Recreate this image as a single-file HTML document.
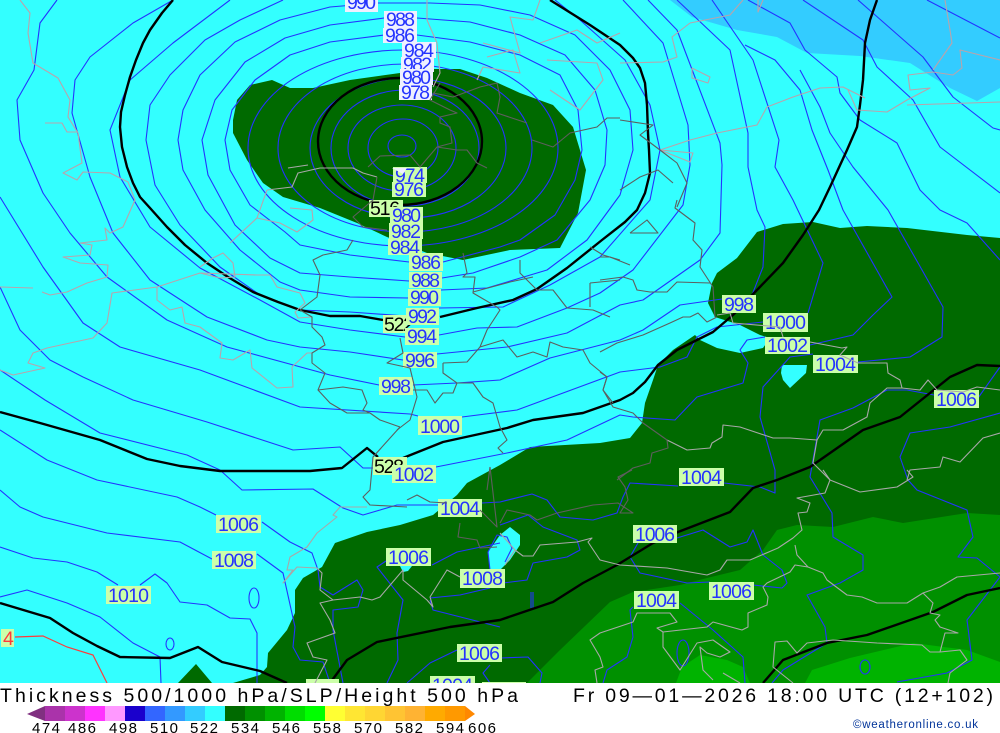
<!DOCTYPE html>
<html><head><meta charset="utf-8"><title>Thickness 500/1000 hPa/SLP/Height 500 hPa</title>
<style>
html,body{margin:0;padding:0;background:#fff;width:1000px;height:733px;overflow:hidden}
svg{display:block}
text{font-family:"Liberation Sans",sans-serif}
.b polyline,.b path,.b ellipse{fill:none;stroke:#2433ff;stroke-width:1.1;stroke-linejoin:round}
.k polyline,.k path,.k ellipse{fill:none;stroke:#000;stroke-width:2.4;stroke-linejoin:round}
.c polyline{fill:none;stroke-width:1.1;stroke-linejoin:round}
.l rect{fill:#ccffaa}
.l rect.w{fill:#eef0ff}
.l text{fill:#2433ff;font-size:19.5px}
.l text.t{fill:#000}
.s text{font-size:15px;fill:#000}
</style></head><body>
<svg width="1000" height="733" viewBox="0 0 1000 733" xmlns="http://www.w3.org/2000/svg">
<rect width="1000" height="683" fill="#33ffff"/>
<!-- light blue NE -->
<polygon fill="#33ccff" points="670,0 692,17 737,30 777,37 807,53 860,56 910,63 950,88 977,101 1000,88 1000,0"/>
<!-- dark green north -->
<polygon fill="#006a00" points="233,120 237,100 250,85 272,80 290,88 313,88 350,80 400,73 433,69 460,69 487,78 520,93 553,105 573,127 586,170 578,213 560,248 510,250 463,260 427,253 387,237 357,223 320,208 283,197 263,183 247,160 233,133"/>
<!-- dark green south-east -->
<polygon fill="#006a00" points="233,683 260,675 267,667 268,653 287,630 295,613 295,590 303,578 322,567 335,543 367,532 400,525 433,515 457,495 467,483 500,465 530,447 600,443 630,438 642,423 645,403 653,380 658,365 673,350 695,335 700,340 717,348 740,353 763,348 770,338 760,335 740,325 715,317 708,303 712,283 717,273 737,258 757,232 783,224 813,222 840,228 867,226 907,228 967,235 1000,238 1000,683"/>
<polygon fill="#006a00" points="178,683 196,664 212,683"/>
<polygon fill="#33ffff" points="782,365 807,365 806,373 790,388 783,380 781,373"/>
<polygon fill="#33ffff" points="488,552 500,535 510,527 520,535 520,545 510,560 500,570 490,570"/>
<polygon fill="#33ffff" points="400,566 412,566 408,571 403,572"/>
<!-- mid green -->
<polygon fill="#009000" points="527,683 560,650 610,602 633,592 680,585 707,578 740,570 763,550 777,530 797,525 833,527 873,517 903,523 967,513 1000,515 1000,683"/>
<!-- bright green -->
<polygon fill="#00b300" points="676,683 682,667 700,655 727,660 743,667 750,683"/>
<polygon fill="#00b300" points="805,683 812,670 850,658 913,643 967,650 1000,662 1000,683"/>

<!-- isobars -->
<g class="b">
<ellipse cx="402" cy="146" rx="14" ry="11"/>
<ellipse cx="403" cy="148" rx="35" ry="29"/>
<ellipse cx="402" cy="148" rx="54" ry="43"/>
<ellipse cx="405" cy="148" rx="74" ry="58"/>
<ellipse cx="408" cy="148" rx="98" ry="70"/>
<ellipse cx="405" cy="148" rx="127" ry="84"/>
<ellipse cx="403" cy="148" rx="155" ry="98"/>
<polyline points="443,262 500,247 520,240 555,215 575,180 582,150 578,110 560,75 520,55 470,42 417,35 384,35 330,42 290,55 255,80 232,110 225,140 230,170 250,205 285,232 300,245 350,255 409,262"/>
<polyline points="442,278 473,273 520,257 557,240 590,200 605,165 607,130 595,90 565,55 520,35 470,22 417,18 384,18 330,25 285,38 245,62 215,100 202,140 208,175 235,225 270,258 300,273 350,277 409,281"/>
<polyline points="441,290 487,288 547,270 587,240 620,195 633,150 630,110 610,70 575,35 530,15 480,5 430,3 378,3 330,7 280,20 235,42 200,75 183,110 178,140 183,170 205,210 240,250 280,282 300,290 350,297 408,298"/>
<polyline points="439,308 503,307 550,285 600,257 650,200 660,150 650,105 625,60 580,20 555,0"/>
<polyline points="283,0 240,20 205,40 170,75 150,105 146,140 155,185 180,225 220,267 260,295 300,310 350,312 406,316"/>
<polyline points="439,335 477,328 517,327 567,308 600,293 633,270 683,205 690,165 688,125 663,43 623,0"/>
<polyline points="230,0 173,43 130,80 110,130 120,177 150,227 200,268 260,300 300,322 350,330 405,337"/>
<polyline points="437,354 507,347 567,333 620,305 643,300 700,260 720,233 722,165 720,143 677,30 648,0"/>
<polyline points="173,0 133,23 90,57 75,80 72,113 90,177 113,233 150,280 207,317 267,340 300,347 350,352 403,360"/>
<polyline points="413,385 457,383 500,380 550,358 620,340 643,330 680,305 722,299"/>
<polyline points="752,295 763,267 765,227 757,210 748,167 748,133 730,50 677,0"/>
<polyline points="57,0 40,23 34,70 17,100 20,140 43,193 70,233 107,277 167,320 227,347 330,375 379,385"/>
<polyline points="0,197 43,267 83,323 120,347 200,370 300,407 410,414 418,416"/>
<polyline points="462,417 517,410 620,372 660,367 687,357 697,337 717,327 763,322"/>
<polyline points="808,313 823,263 793,200 775,167 779,140 753,60 712,0"/>
<polyline points="0,287 20,330 50,360 83,377 133,400 207,422 293,450 340,447 363,468 373,468"/>
<polyline points="436,467 507,453 567,440 620,415 633,417 675,420 697,397 743,383 748,363 740,350 747,340 765,337"/>
<polyline points="810,345 853,335 873,315 892,297 843,210 828,170 812,130 800,90 775,60 745,45"/>
<polyline points="0,370 45,400 100,433 187,455 220,470 242,490 313,489 343,508 363,515 397,505 438,505"/>
<polyline points="482,503 500,502 532,494 547,500 560,517 593,520 617,513 623,497 630,483 678,486"/>
<polyline points="724,483 760,487 775,493 775,470 760,417 763,387 790,357 813,354"/>
<polyline points="858,362 910,357 942,337 943,307 888,210 853,167 830,133 820,107 800,70"/>
<polyline points="748,0 790,23 805,50 837,77 840,93 860,120 897,143 920,190 940,210 967,223 1000,260"/>
<polyline points="803,0 863,40 877,67 913,100 940,147 1000,193"/>
<polyline points="858,0 923,57 953,97 993,128 1000,130"/>
<polyline points="927,0 1000,38"/>
<polyline points="978,398 1000,367"/>
<polyline points="934,395 907,390 887,390 853,408 820,420 810,477 832,513 833,537 863,555 863,570 840,583 807,595 825,627 827,643 783,670 772,683"/>
<polyline points="1000,413 950,427 910,433 900,457 908,480 917,490 967,510 973,537 958,557 977,558 1000,577 967,620 972,660 947,673 897,682"/>
<polyline points="0,547 33,558 67,562 97,572 118,585"/>
<polyline points="140,585 155,574 167,583 180,602 207,605 230,618 250,619 257,633 257,683"/>
<polyline points="0,597 27,590 67,603 100,617 133,643 160,657 161,683"/>
<polyline points="0,430 47,460 97,480 177,497 200,507 216,515"/>
<polyline points="262,522 290,542 312,553 318,570 320,587 333,595 357,580 363,590 358,607 333,610 333,630 343,683"/>
<polyline points="0,490 20,507 43,517 107,533 180,542 212,559"/>
<polyline points="257,554 283,573 295,627 293,647 300,660 323,662 330,683"/>
<ellipse cx="254" cy="598" rx="5" ry="10"/>
<ellipse cx="170" cy="644" rx="4" ry="6"/>
<ellipse cx="683" cy="653" rx="6" ry="13"/>
<ellipse cx="865" cy="667" rx="5" ry="7"/>
<polyline points="531,592 531,608"/><polyline points="533,592 533,608"/>
<polyline points="677,538 703,530 730,547 747,542 753,530 763,555 782,570 787,583 782,588 753,585"/>
<polyline points="638,543 630,557 640,573 687,583 710,582"/>
<polyline points="633,607 630,610 633,637 627,657 607,670 603,683"/>
<polyline points="680,603 713,630 743,657 745,683"/>
<polyline points="500,525 528,515 543,527 577,540 580,550 567,557 533,563 527,580 503,583"/>
<polyline points="500,658 528,657 542,673 540,683"/>
<polyline points="386,561 377,567 403,600 397,633 398,660 387,683"/>
<polyline points="432,565 457,552 500,543"/>
<polyline points="430,598 460,595 490,588"/>
<polyline points="430,600 433,610 500,627"/>
<polyline points="457,650 430,663 407,683"/>
<polyline points="490,665 483,673 490,683"/>
<polyline points="490,570 488,552 497,535 507,537 512,548 505,562" />
</g>
<polyline points="15,637 43,636 67,647 93,655 107,683" fill="none" stroke="#ff3b3b" stroke-width="1.2"/>

<!-- height contours -->
<g class="k">
<ellipse cx="400" cy="141.5" rx="82" ry="63.5"/>
<polyline points="173,0 162,13 150,30 143,43 136,60 130,77 125,95 121,112 120,127 122,147 127,167 133,183 140,197 150,208 167,227 185,245 207,263 228,277 253,292 278,302 300,310 330,316 360,316 383,320"/>
<polyline points="440,317 477,308 513,300 537,289 567,268 602,240 625,222 637,210 645,193 650,173 649,150 648,133 647,105 645,83 640,68 633,58 620,45 590,25 550,0"/>
<polyline points="877,0 870,20 865,43 863,80 860,105 857,127 847,150 830,187 819,210 803,235 783,263 757,290 733,315 713,332 677,350 658,365 645,382 633,393 620,400 583,413 533,420 507,428 443,442 403,458"/>
<polyline points="0,412 40,423 100,440 147,459 180,466 220,471 310,471 342,468 367,448 378,457"/>
<polyline points="0,603 50,618 73,633 97,646 120,657 170,658 198,647 222,662 260,671 287,683"/>
<polyline points="330,683 347,660 377,642 450,627 500,620 553,602 583,583 617,565 653,543 678,532 730,512 753,488 777,480 810,467 863,430 900,417 950,377 977,365 1000,366"/>
<polyline points="763,683 783,660 827,643 867,635 933,612 967,595 1000,588"/>
</g>

<!-- labels -->
<g class="l">
<rect class="w" x="345" y="-6" width="33" height="18"/><text x="347" y="9" textLength="29">990</text>
<rect class="w" x="384" y="11" width="33" height="17"/><text x="386" y="26" textLength="29">988</text>
<rect class="w" x="383" y="28" width="34" height="15"/><text x="385" y="42" textLength="30">986</text>
<rect class="w" x="402" y="42" width="34" height="16"/><text x="404" y="57" textLength="30">984</text>
<rect class="w" x="401" y="57" width="33" height="15"/><text x="403" y="71" textLength="29">982</text>
<rect class="w" x="400" y="69" width="33" height="16"/><text x="402" y="84" textLength="29">980</text>
<rect class="w" x="399" y="85" width="33" height="15"/><text x="401" y="99" textLength="29">978</text>
<rect x="393" y="167" width="34" height="16"/><text x="395" y="182" textLength="30">974</text>
<rect x="392" y="182" width="34" height="15"/><text x="394" y="196" textLength="30">976</text>
<rect x="369" y="200" width="34" height="17"/><text class="t" x="370" y="215" textLength="30">516</text>
<rect x="390" y="207" width="33" height="16"/><text x="392" y="222" textLength="29">980</text>
<rect x="389" y="223" width="34" height="16"/><text x="391" y="238" textLength="30">982</text>
<rect x="388" y="239" width="34" height="16"/><text x="390" y="254" textLength="30">984</text>
<rect x="409" y="253" width="34" height="18"/><text x="411" y="269" textLength="30">986</text>
<rect x="409" y="272" width="33" height="16"/><text x="411" y="287" textLength="29">988</text>
<rect x="408" y="289" width="33" height="17"/><text x="410" y="304" textLength="29">990</text>
<rect x="383" y="315" width="24" height="18"/><text class="t" x="384" y="331" textLength="30">522</text>
<rect x="406" y="308" width="33" height="17"/><text x="408" y="323" textLength="29">992</text>
<rect x="405" y="328" width="34" height="17"/><text x="407" y="343" textLength="30">994</text>
<rect x="403" y="352" width="34" height="16"/><text x="405" y="367" textLength="30">996</text>
<rect x="379" y="377" width="34" height="18"/><text x="381" y="393" textLength="30">998</text>
<rect x="418" y="416" width="44" height="19"/><text x="420" y="433" textLength="40">1000</text>
<rect x="373" y="457" width="34" height="18"/><text class="t" x="374" y="473" textLength="30">528</text>
<rect x="392" y="465" width="44" height="18"/><text x="394" y="481" textLength="40">1002</text>
<rect x="438" y="499" width="44" height="18"/><text x="440" y="515" textLength="40">1004</text>
<rect x="216" y="515" width="45" height="18"/><text x="218" y="531" textLength="41">1006</text>
<rect x="212" y="551" width="44" height="18"/><text x="214" y="567" textLength="40">1008</text>
<rect x="106" y="586" width="45" height="18"/><text x="108" y="602" textLength="41">1010</text>
<rect x="1" y="629" width="13" height="18"/><text x="3" y="645" style="fill:#ff3b3b">4</text>
<rect x="386" y="548" width="45" height="18"/><text x="388" y="564" textLength="41">1006</text>
<rect x="460" y="569" width="45" height="19"/><text x="462" y="585" textLength="41">1008</text>
<rect x="457" y="644" width="45" height="18"/><text x="459" y="660" textLength="41">1006</text>
<rect x="430" y="676" width="45" height="7"/><text x="432" y="692" textLength="41">1004</text>
<rect x="306" y="679" width="33" height="4"/>
<rect x="482" y="682" width="44" height="1"/>
<rect x="722" y="295" width="34" height="18"/><text x="724" y="311" textLength="30">998</text>
<rect x="763" y="313" width="45" height="19"/><text x="765" y="329" textLength="41">1000</text>
<rect x="765" y="337" width="45" height="17"/><text x="767" y="352" textLength="41">1002</text>
<rect x="813" y="355" width="45" height="18"/><text x="815" y="371" textLength="41">1004</text>
<rect x="934" y="390" width="45" height="18"/><text x="936" y="406" textLength="41">1006</text>
<rect x="679" y="468" width="45" height="18"/><text x="681" y="484" textLength="41">1004</text>
<rect x="633" y="525" width="44" height="18"/><text x="635" y="541" textLength="40">1006</text>
<rect x="709" y="582" width="45" height="18"/><text x="711" y="598" textLength="41">1006</text>
<rect x="634" y="591" width="45" height="18"/><text x="636" y="607" textLength="41">1004</text>
</g>

<!-- coastlines / borders -->
<g class="c">
<g stroke="#b8a4ac">
<polyline points="20,0 30,13 28,33 33,63 58,78 70,100 68,117 78,133 82,163 63,173 77,180 83,172 110,173 128,182 135,200 123,227 110,233 105,228 107,240 80,243 92,245 90,255 63,257 80,263 108,265 107,277 87,283 67,292 50,295 42,292"/>
<polyline points="0,287 33,288"/>
<polyline points="0,370 13,375 45,368 28,363 33,353 47,348 93,338 107,323 112,293 157,287 200,273 257,275 270,275 277,287 300,293 305,303 295,312 298,318 312,317"/>
<polyline points="157,287 157,300 170,310 182,307 185,323 200,327 222,343 220,358 233,360 250,350 252,368 277,388 293,387 292,367 307,353 312,353"/>
<polyline points="45,123 62,123 67,132 78,132"/>
<polyline points="200,267 213,258 223,253 233,263 235,277 220,278 200,273"/>
<polyline points="230,243 257,218 267,190"/>
<polyline points="257,218 280,223 297,232 313,220 312,210 290,208"/>
<polyline points="427,0 427,20 437,43 440,73 433,87"/>
<polyline points="483,43 520,53 510,17 533,20 540,0"/>
<polyline points="487,57 513,50 520,73 483,67 477,80"/>
<polyline points="540,43 577,30 597,43 620,33"/>
<polyline points="547,60 597,63 603,80 580,110 550,90"/>
<polyline points="660,150 690,140 717,133 757,125 767,107 793,97 820,88 843,87 865,98"/>
<polyline points="848,90 857,110 887,112 907,100 930,88 910,90 908,75 933,72 953,75 962,68 960,50 1000,60"/>
<polyline points="907,105 1000,102"/>
<polyline points="945,0 950,30 952,43 933,70"/>
<polyline points="690,23 672,37 677,57 663,62 620,63"/>
<polyline points="690,23 730,15 743,0"/>
<polyline points="692,68 710,77 708,83 692,78 692,68"/>
<polyline points="758,0 758,12 763,0"/>
<polyline points="660,150 693,153 690,162 660,150"/>
</g>
<g stroke="#a8a8a8">
<polyline points="267,190 292,187 298,173 320,168 353,168 363,173 377,177"/>
<polyline points="288,168 308,165"/>
<polyline points="367,507 340,507 333,515 337,517 317,533 307,547 290,557 287,570 293,570 283,583 297,567 317,568 322,573 320,590 333,600 360,597 372,600 380,597 403,570 403,580 427,600 433,607 430,597 447,570 460,577"/>
<polyline points="333,600 320,603 330,620 335,633 307,643 313,657 327,660 315,683"/>
<polyline points="717,315 730,313 733,323 780,327 783,337"/>
<polyline points="810,342 842,348 847,347 840,355 858,363 887,363 888,373 900,380 902,388 887,388 870,403 867,417 843,430 823,430 817,440"/>
<polyline points="902,388 920,390 928,380 937,390 963,392 977,387 1000,390"/>
<polyline points="667,440 687,450 710,448 712,443 722,437 723,425 740,427 773,438 790,438 817,440 813,463 830,480"/>
<polyline points="907,480 910,470 940,467 943,457 960,462 983,438 1000,433"/>
<polyline points="823,470 830,480 825,493 797,498 810,503 807,512 798,513 802,530 793,538 778,548 750,560 727,560 720,570 707,575 667,568 620,565 600,560 588,542 592,538 577,542 540,545 533,556 523,556 515,550"/>
<polyline points="830,480 860,492 897,487 913,477 907,470"/>
<polyline points="795,545 797,555 808,567 795,565 790,572 767,583 763,587 768,597 767,605 748,613 748,627 742,630 713,622 707,627 663,632 657,628 677,622 670,613 637,613 633,622 600,633 590,640 600,657 603,667 595,670 597,683"/>
<polyline points="808,567 823,573 827,580 847,595 862,597 877,603 907,603 923,593 940,587 957,577 1000,573"/>
<polyline points="923,593 933,603 930,613 940,615 935,620 940,627 958,633 945,633 940,652 930,652 922,645 877,643 833,640 807,643 797,653 787,641 775,642 773,667 793,683"/>
<polyline points="940,652 960,650 967,660 950,673 948,683"/>
<polyline points="663,632 663,647 680,670 697,643 713,640 730,652 720,657 707,653 700,647 703,670 713,680"/>
<polyline points="723,673 740,683"/>
<polyline points="500,533 515,550 505,565"/>
</g>
<g stroke="#5e5e5e">
<polyline points="368,167 380,156 410,155 420,167 437,147 457,150 467,150 477,163 487,168"/>
<polyline points="377,177 373,200 353,217 363,227 387,230"/>
<polyline points="440,83 430,100 450,110 457,113 440,117 440,123 450,127 452,143 437,147"/>
<polyline points="433,93 453,97 480,87 497,83 500,97 497,113 527,123"/>
<polyline points="532,140 553,147 570,133 597,127 607,118 620,118"/>
<polyline points="620,120 653,125 640,135 660,150 677,163 687,183 677,207"/>
<polyline points="620,190 640,177 658,170 673,183"/>
<polyline points="677,200 675,208 695,223 693,240 702,250 700,267 713,287 715,317"/>
<polyline points="600,280 623,277 633,280 637,290 650,292 667,292 677,282 710,283"/>
<polyline points="630,233 647,220 658,233 630,233"/>
<polyline points="600,257 610,257 630,265"/>
<polyline points="600,352 617,343 643,335 670,323 683,317 690,317 698,313 707,322 717,317"/>
<polyline points="600,372 607,377 603,390 613,407 633,413 643,423 667,440 668,448 652,453 650,463 633,468 617,480"/>
<polyline points="500,523 507,510 530,515 537,520 557,513 593,505 618,503 633,513 620,513 628,500 625,487 618,477 632,470"/>
<polyline points="353,240 347,250 323,255 313,260 320,275 317,297 300,310 312,317 312,327 322,337 325,345 312,353 312,363 325,373 318,390 330,403 347,413 370,413 380,420 400,427"/>
<polyline points="318,390 343,387 362,390 367,403 363,410 370,413"/>
<polyline points="400,427 373,457 370,490 363,497 370,505 407,507"/>
<polyline points="407,500 417,495 430,502 447,503"/>
<polyline points="400,338 403,353 387,363 410,368 417,397 410,420 397,430"/>
<polyline points="413,390 427,390 435,403 443,393 453,393 457,383 473,383 483,397 493,403 500,427 507,440 498,448 503,453"/>
<polyline points="490,467 487,490"/>
<polyline points="443,363 467,362 480,347 503,340 517,357 533,352 547,357 550,342 563,347 583,350 590,363 607,377 603,390 613,403"/>
<polyline points="443,363 443,373 457,383"/>
<polyline points="463,253 467,273 463,277 475,277 473,293 497,307 500,310 487,330 480,347"/>
<polyline points="520,260 520,273 530,283 537,290 553,290 567,308 593,310 610,317"/>
<polyline points="590,283 590,307"/><polyline points="620,280 590,283"/>
<polyline points="590,247 603,255 620,260"/>
<polyline points="473,292 510,282 533,277"/>
<polyline points="460,523 458,537 477,540 480,548 497,547"/>
<polyline points="480,510 497,527 490,467"/>
</g>
</g>
<polygon points="392,168 407,168 403,174" fill="#eef0ff"/>

<!-- footer -->
<rect y="683" width="1000" height="50" fill="#fff"/>
<text x="0" y="702" font-size="19.5" textLength="518" fill="#000">Thickness 500/1000 hPa/SLP/Height 500 hPa</text>
<text x="573" y="702" font-size="19.5" textLength="420" fill="#000">Fr 09—01—2026 18:00 UTC (12+102)</text>
<polygon points="45,706 45,721 27,714" fill="#803080"/>
<rect x="45" y="706" width="20" height="15" fill="#aa33aa"/>
<rect x="65" y="706" width="20" height="15" fill="#cc33cc"/>
<rect x="85" y="706" width="20" height="15" fill="#ff33ff"/>
<rect x="105" y="706" width="20" height="15" fill="#ff99ff"/>
<rect x="125" y="706" width="20" height="15" fill="#1a00cc"/>
<rect x="145" y="706" width="20" height="15" fill="#3366ff"/>
<rect x="165" y="706" width="20" height="15" fill="#3399ff"/>
<rect x="185" y="706" width="20" height="15" fill="#33ccff"/>
<rect x="205" y="706" width="20" height="15" fill="#33ffff"/>
<rect x="225" y="706" width="20" height="15" fill="#006a00"/>
<rect x="245" y="706" width="20" height="15" fill="#009000"/>
<rect x="265" y="706" width="20" height="15" fill="#00b300"/>
<rect x="285" y="706" width="20" height="15" fill="#00dd00"/>
<rect x="305" y="706" width="20" height="15" fill="#00ff00"/>
<rect x="325" y="706" width="20" height="15" fill="#ffff33"/>
<rect x="345" y="706" width="20" height="15" fill="#ffe633"/>
<rect x="365" y="706" width="20" height="15" fill="#ffd633"/>
<rect x="385" y="706" width="20" height="15" fill="#ffc433"/>
<rect x="405" y="706" width="20" height="15" fill="#ffb333"/>
<rect x="425" y="706" width="20" height="15" fill="#ffaa00"/>
<rect x="445" y="706" width="20" height="15" fill="#ff9900"/>
<polygon points="465,706 465,721 475,714" fill="#ff8800"/>
<g class="s">
<text x="32" y="733" textLength="28">474</text>
<text x="68" y="733" textLength="28">486</text>
<text x="109" y="733" textLength="28">498</text>
<text x="150" y="733" textLength="28">510</text>
<text x="190" y="733" textLength="28">522</text>
<text x="231" y="733" textLength="28">534</text>
<text x="272" y="733" textLength="28">546</text>
<text x="313" y="733" textLength="28">558</text>
<text x="354" y="733" textLength="28">570</text>
<text x="395" y="733" textLength="28">582</text>
<text x="436" y="733" textLength="28">594</text>
<text x="468" y="733" textLength="28">606</text>
</g>
<text x="853" y="728" font-size="11.5" textLength="125" fill="#003399">©weatheronline.co.uk</text>
</svg>
</body></html>
